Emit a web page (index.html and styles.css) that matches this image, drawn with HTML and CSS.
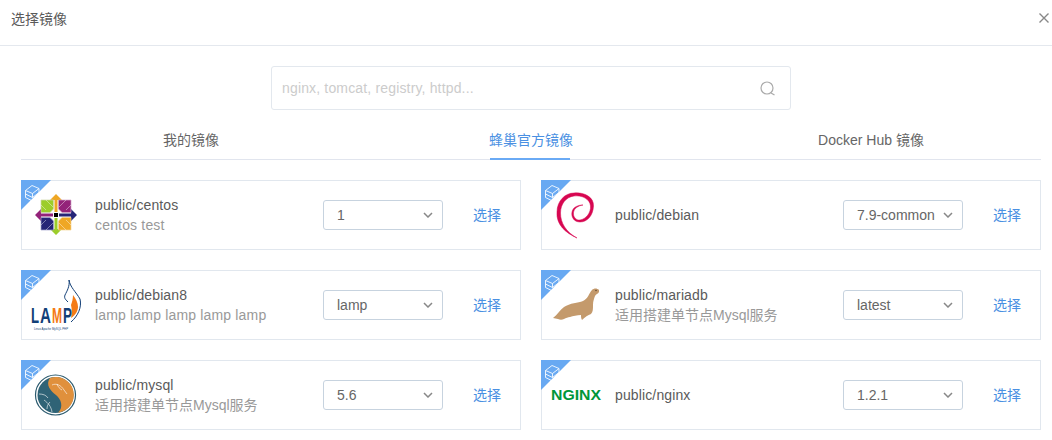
FILE: index.html
```html
<!DOCTYPE html>
<html>
<head>
    <title>选择镜像</title>
    <link rel="stylesheet" href="styles.css">
</head>
<body>
    <svg class="defs" width="0" height="0">
        <symbol id="badge" viewBox="0 0 30 30">
            <path class="corner" d="M0 0h30L0 30z"/>
            <path class="cube" d="M4.500 10.500L11 5.500l7 3-6.500 5zM4.500 10.500V14l7 3.500 6.500-5M4.500 14v3.500l7 3.500 5-3.500M11.500 13.500v4M18 8.500v4"/>
        </symbol>
        <symbol id="chevron" viewBox="0 0 10 6">
            <path d="M1 1l4 4 4-4"/>
        </symbol>
    </svg>

    <div class="header">
        <span class="title">选择镜像</span>
        <svg class="close" width="12" height="12" viewBox="0 0 12 12"><path d="M1.500 1.500l9 9M10.500 1.500l-9 9"/></svg>
    </div>

    <div class="content">
        <div class="search">
            <input type="text" placeholder="nginx, tomcat, registry, httpd...">
            <svg width="16" height="16" viewBox="0 0 16 16"><circle cx="7" cy="7" r="6"/><path d="M11 12l3.500 2"/></svg>
        </div>

        <div class="tabs">
            <div class="tab"><span>我的镜像</span></div>
            <div class="tab active"><span>蜂巢官方镜像</span></div>
            <div class="tab"><span>Docker Hub 镜像</span></div>
        </div>

        <div class="list">
            <div class="card">
                <svg class="badge" width="30" height="30"><use href="#badge"/></svg>
                <svg class="logo" width="60" height="60" viewBox="0 0 60 60">
                    <path fill="#efa724" d="M30 9l6 6h-4.500v12h-3V15H24z"/>
                    <path fill="#932279" d="M9 30l6-6v4.500h12v3H15V36z"/>
                    <path fill="#262577" d="M51 30l-6-6v4.500H33v3h12V36z"/>
                    <path fill="#9ccd2a" d="M30 50l-6-6h4.500V33h3v11H36z"/>
                    <path fill="#9ccd2a" stroke="#cfd9a8" stroke-width=".7" d="M15 15h12.500v9l-3.500 3.500H15z"/>
                    <path fill="#932279" stroke="#d3a8c9" stroke-width=".7" d="M32.500 15H45v12.500h-9l-3.500-3.500z"/>
                    <path fill="#262577" stroke="#a8a8cf" stroke-width=".7" d="M15 32.500h9l3.500 3.500v9H15z"/>
                    <path fill="#efa724" stroke="#f5d595" stroke-width=".7" d="M36 32.500h9V45H32.500v-9z"/>
                    <path fill="none" stroke="#fff" stroke-width=".6" opacity=".7" d="M20 15l7 7M15 20l5 5M40 15l-7 7M45 20l-5 5M20 45l7-7M15 40l5-5M40 45l-7-7M45 40l-5-5"/>
                    <path fill="#000" d="M28 28h4v4h-4z"/>
                </svg>
                <div class="info"><div class="name">public/centos</div><div class="desc latin">centos test</div></div>
                <div class="select"><span>1</span><svg width="10" height="6"><use href="#chevron"/></svg></div>
                <a class="pick">选择</a>
            </div>

            <div class="card">
                <svg class="badge" width="30" height="30"><use href="#badge"/></svg>
                <svg class="logo" width="60" height="60" viewBox="0 0 60 60"><path fill="#d70751" stroke="#d70751" stroke-width=".5" d="M31 53C20 48 10 40 11 27 11 16 19 8 28 8c10-1 20 4 19.500 13C47 31 41 37 34 37c-6 0-9-5-8-10 1-5 6-7 11-7-4 .500-9 3-9.500 7.500C27 32 30 35.500 34 35c6-1 11-7 10.500-14C44 14 36 10 28 11 20 12 14.500 19 14.500 28c0 10 5.500 19 16.500 25z"/></svg>
                <div class="info"><div class="name">public/debian</div></div>
                <div class="select"><span>7.9-common</span><svg width="10" height="6"><use href="#chevron"/></svg></div>
                <a class="pick">选择</a>
            </div>

            <div class="card">
                <svg class="badge" width="30" height="30"><use href="#badge"/></svg>
                <svg class="logo" width="60" height="60" viewBox="0 0 60 60">
                    <path fill="none" stroke="#123f77" stroke-width="1" d="M43 5c1 7 7 12 11 19 2 8-2 17-9 23"/>
                    <path fill="none" stroke="#123f77" stroke-width="1" d="M43 5c1 6-2 11-4 15-1 3 0 4 3 7"/>
                    <path fill="#f47b16" d="M47 20c3 4 5 8 5 12 0 5-4 9-7 11 1-4 1-9 0-13 1-3 2-6 2-10z"/>
                    <text class="lamp" transform="translate(5 48) scale(.6 1)">L</text>
                    <text class="lamp" transform="translate(14 48) scale(.69 1)">A</text>
                    <text class="lamp lamp-m" transform="translate(26 48) scale(.55 1)">M</text>
                    <text class="lamp" transform="translate(37 48) scale(.61 1)">P</text>
                    <text class="lamp-small" x="8" y="55" textLength="34">Linux Apache MySQL PHP</text>
                </svg>
                <div class="info"><div class="name">public/debian8</div><div class="desc latin">lamp lamp lamp lamp lamp</div></div>
                <div class="select"><span>lamp</span><svg width="10" height="6"><use href="#chevron"/></svg></div>
                <a class="pick">选择</a>
            </div>

            <div class="card">
                <svg class="badge" width="30" height="30"><use href="#badge"/></svg>
                <svg class="logo" width="60" height="60" viewBox="0 0 60 60"><path fill="#c49a6c" d="M7 43C11 40 14 35 18 32c6-4 14-4 19-6 5-2 6-8 9-11 2-2 5-2 7 0v2c-1 2-3 2-4 4-1 3-2 5-2 9 0 4 0 7-2 9-3 1-6 3-9 6-1-2-1-3-1-5-4 0-8 1-11 2-2 0-4 1-6 2-2 1-4 1-6 0z"/><circle cx="50" cy="15.500" r=".7" fill="#4d3a28"/></svg>
                <div class="info"><div class="name">public/mariadb</div><div class="desc">适用搭建单节点Mysql服务</div></div>
                <div class="select"><span>latest</span><svg width="10" height="6"><use href="#chevron"/></svg></div>
                <a class="pick">选择</a>
            </div>

            <div class="card">
                <svg class="badge" width="30" height="30"><use href="#badge"/></svg>
                <svg class="logo" width="60" height="60" viewBox="0 0 60 60">
                    <circle cx="29.500" cy="30" r="20" fill="#fff" stroke="#2b5a6e" stroke-width="1.200"/>
                    <circle cx="29.500" cy="30" r="18" fill="#2f6376"/>
                    <path fill="#e0903c" d="M24 12.900A18 18 0 1 1 32 47.800C38 42 35 34 30 30 25 26 19 20 24 12.900z"/>
                    <path fill="none" stroke="#fff" stroke-width=".6" d="M26 20c4-2 9 0 12 5l3 4M31 19c1 3 3 5 5 6M26 47c-1-6-4-9-8-12M21 44c0-3 1-5 3-7M13 29c4 0 7 1 9 4"/>
                </svg>
                <div class="info"><div class="name">public/mysql</div><div class="desc">适用搭建单节点Mysql服务</div></div>
                <div class="select"><span>5.6</span><svg width="10" height="6"><use href="#chevron"/></svg></div>
                <a class="pick">选择</a>
            </div>

            <div class="card">
                <svg class="badge" width="30" height="30"><use href="#badge"/></svg>
                <svg class="logo" width="60" height="60" viewBox="0 0 60 60"><text class="nginx" x="5" y="35" textLength="50" lengthAdjust="spacingAndGlyphs">NGINX</text></svg>
                <div class="info"><div class="name">public/nginx</div></div>
                <div class="select"><span>1.2.1</span><svg width="10" height="6"><use href="#chevron"/></svg></div>
                <a class="pick">选择</a>
            </div>
        </div>
    </div>
</body>
</html>
```

FILE: styles.css
```css
* {
    margin: 0;
    padding: 0;
    box-sizing: border-box;
}
body {
    height: 440px;
    overflow: hidden;
    background: #fff;
    color: #5a5a5a;
    font-family: "Liberation Sans", "Noto Sans CJK SC", sans-serif;
    font-size: 14px;
}
.defs {
    position: absolute;
}
.header {
    height: 46px;
    padding: 0 2px 10px 11px;
    display: flex;
    justify-content: space-between;
    align-items: center;
    border-bottom: 1px solid #e4e8ee;
}
.close {
    fill: none;
    stroke: #888;
    stroke-width: 1.4;
}
.content {
    padding: 20px 11px 0 21px;
}
.search {
    width: 520px;
    height: 44px;
    margin: 0 auto;
    padding: 0 14px 0 10px;
    display: flex;
    align-items: center;
    border: 1px solid #e3e8ee;
    border-radius: 3px;
}
.search input {
    flex: 1;
    border: none;
    outline: none;
    font: inherit;
    letter-spacing: .16px;
    color: #555;
}
.search input::placeholder {
    color: #ccc;
}
.search svg {
    margin-top: 2px;
    fill: none;
    stroke: #aaa;
    stroke-width: 1.2;
}
.tabs {
    display: grid;
    grid-template-columns: repeat(3, 1fr);
    height: 50px;
    margin-bottom: 20px;
    border-bottom: 1px solid #e1e5ee;
    color: #666;
    text-align: center;
}
.tab {
    padding-top: 20px;
}
.tab span {
    position: relative;
    display: inline-block;
    height: 30px;
    line-height: 20px;
}
.tab.active {
    color: #4a90e2;
}
.tab.active span::after {
    content: "";
    position: absolute;
    left: 1px;
    right: 3px;
    bottom: 0;
    height: 2px;
    background: #6aaaf5;
}
.list {
    display: grid;
    grid-template-columns: 500px 500px;
    grid-auto-rows: 70px;
    gap: 20px;
}
.card {
    position: relative;
    display: flex;
    align-items: center;
    padding: 0 19px 0 4px;
    border: 1px solid #e1e7ee;
}
.badge {
    position: absolute;
    left: -1px;
    top: -1px;
}
.corner {
    fill: #68a9f2;
}
.cube {
    fill: none;
    stroke: #fff;
    stroke-width: 1;
    opacity: .85;
}
.logo {
    flex: none;
    margin-right: 9px;
}
.lamp {
    font-family: "Liberation Sans", sans-serif;
    font-size: 22px;
    font-weight: bold;
    fill: #123f77;
}
.lamp-m {
    fill: #f47b16;
}
.lamp-small {
    font-family: "Liberation Sans", sans-serif;
    font-size: 2.800px;
    fill: #123f77;
}
.nginx {
    font-family: "Liberation Sans", sans-serif;
    font-size: 14px;
    font-weight: bold;
    fill: #009639;
}
.info {
    flex: 1;
    line-height: 20px;
}
.name {
    letter-spacing: .13px;
}
.desc {
    color: #999;
}
.desc.latin {
    letter-spacing: .17px;
}
.select {
    width: 120px;
    height: 30px;
    padding: 0 9px 0 13px;
    display: flex;
    justify-content: space-between;
    align-items: center;
    border: 1px solid #c7d3df;
    border-radius: 3px;
    color: #666;
}
.select svg {
    fill: none;
    stroke: #888;
    stroke-width: 1.5;
}
.pick {
    margin-left: 30px;
    padding-bottom: 2px;
    color: #4a90e2;
}
```
